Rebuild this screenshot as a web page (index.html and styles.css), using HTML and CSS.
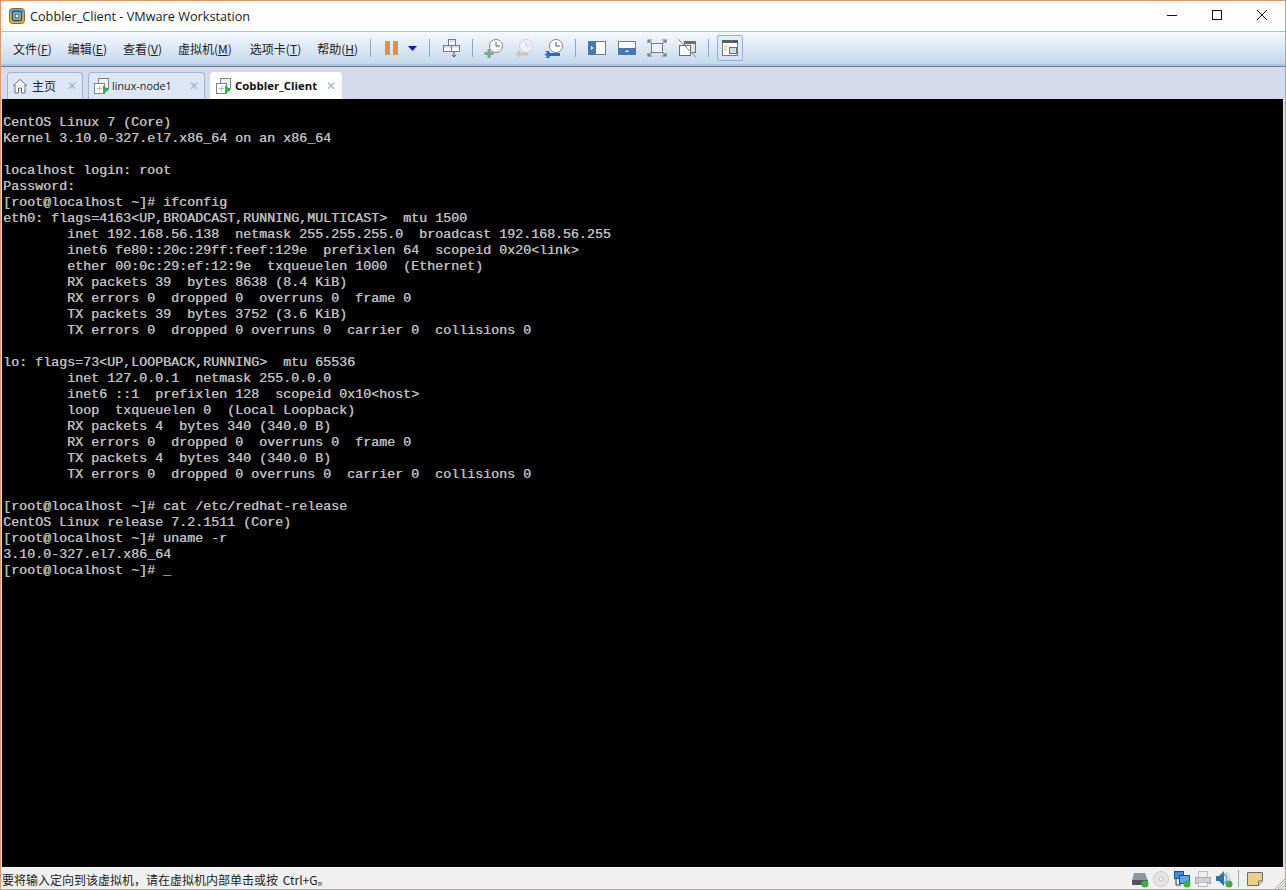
FILE: index.html
```html
<!DOCTYPE html>
<html lang="zh-CN">
<head>
<meta charset="utf-8">
<title>Cobbler_Client - VMware Workstation</title>
<link rel="stylesheet" href="styles.css">
</head>
<body>
<div class="window">
  <header class="titlebar">
    <svg class="app-icon" viewBox="0 0 16 16"><rect x=".5" y=".5" width="15" height="15" rx="3" fill="#e8a93a" stroke="#8a6a30"/><path d="M1 4a3 3 0 0 1 3-3h8a3 3 0 0 1 3 3v1H1z" fill="#4ba3d6"/><rect x="3.5" y="3.5" width="9" height="9" rx="1.5" fill="#9fd3ee" stroke="#24506e" stroke-width="1.4"/><rect x="6" y="6" width="4" height="4" fill="#f4e6b0" stroke="#24506e"/></svg>
    <span class="title-text">Cobbler_Client - VMware Workstation</span>
    <div class="win-controls">
      <svg class="win-btn" viewBox="0 0 12 12"><path d="M1 6.500h10" stroke="#111" fill="none"/></svg>
      <svg class="win-btn" viewBox="0 0 12 12"><rect x="1.500" y="1.500" width="9" height="9" stroke="#111" fill="none"/></svg>
      <svg class="win-btn" viewBox="0 0 12 12"><path d="M1 1l10 10M11 1L1 11" stroke="#111" fill="none"/></svg>
    </div>
  </header>

  <nav class="toolbar">
    <ul class="menu">
      <li>文件(<u>F</u>)</li>
      <li>编辑(<u>E</u>)</li>
      <li>查看(<u>V</u>)</li>
      <li class="menu-wide">虚拟机(<u>M</u>)</li>
      <li>选项卡(<u>T</u>)</li>
      <li>帮助(<u>H</u>)</li>
    </ul>
    <i class="sep"></i>
    <div class="pause-group">
      <svg class="pause" viewBox="0 0 13 14"><path d="M0 0h5v14H0zM8 0h5v14H8z" fill="#d8944f"/></svg>
      <svg class="drop" viewBox="0 0 9 5"><path d="M0 0h9L4.500 5z" fill="#1616c8"/></svg>
    </div>
    <i class="sep"></i>
    <svg class="tool" viewBox="0 0 20 20"><g fill="#fff" stroke="#77797c"><rect x="7.500" y="1.500" width="7" height="6"/><rect x="2.500" y="7.500" width="8" height="6"/><rect x="10.500" y="7.500" width="8" height="6"/></g><path d="M8 3h6M3 9h7M11 9h7" stroke="#a9c4e4"/><path d="M13 14v5M11 17l2 2 2-2" stroke="#55585c" fill="none"/></svg>
    <i class="sep"></i>
    <div class="tool-group">
      <svg class="tool" viewBox="0 0 20 20"><circle cx="12" cy="8" r="6.500" fill="#fff" stroke="#85888c"/><path d="M12 4v4h4" stroke="#55585c" fill="none"/><path d="M3.500 11h3v3h3v3h-3v3h-3v-3h-3v-3h3z" fill="#7fa88b"/></svg>
      <svg class="tool" viewBox="0 0 20 20"><circle cx="12" cy="8" r="6.500" fill="#eef2f8" stroke="#cfd3d8"/><path d="M12 4v4h4" stroke="#c9cdd2" fill="none"/><path d="M1 16l5-4v2.500h8v3H6V20z" fill="#cdc4b6"/></svg>
      <svg class="tool" viewBox="0 0 20 20"><circle cx="12" cy="8" r="6.500" fill="#fff" stroke="#85888c"/><path d="M12 4v4h4" stroke="#55585c" fill="none"/><path d="M1 13h4l1 2h10v3H6l-1 2H1l2-1.500v-1H1v-2h2v-1z" fill="#2f6fb0"/></svg>
    </div>
    <i class="sep"></i>
    <div class="tool-group">
      <svg class="tool" viewBox="0 0 20 20"><rect x="1.500" y="3.500" width="17" height="13" fill="#fff" stroke="#77797c"/><rect x="1" y="3" width="8" height="14" fill="#4878ad"/><path d="M4 8l2.500 2L4 12z" fill="#fff"/></svg>
      <svg class="tool" viewBox="0 0 20 20"><rect x="1.500" y="3.500" width="17" height="13" fill="#fff" stroke="#77797c"/><rect x="1" y="10" width="18" height="7" fill="#4878ad"/><path d="M8 14l2-2 2 2z" fill="#fff"/></svg>
      <svg class="tool" viewBox="0 0 20 20"><rect x="4.500" y="5.500" width="11" height="9" fill="#eef3fa" stroke="#77797c"/><path d="M1 5V2h4M15 2h4v3M1 15v3h4M15 18h4v-3M1 2l3 3M19 2l-3 3M1 18l3-3M19 18l-3-3" stroke="#77797c" stroke-width="1.200" fill="none"/></svg>
      <svg class="tool" viewBox="0 0 20 20"><rect x="7.500" y="3.500" width="11" height="11" fill="#dfe6f0" stroke="#6b6d70"/><rect x="7" y="3" width="12" height="3" fill="#6b6d70"/><rect x="2.500" y="7.500" width="11" height="10" fill="#fff" stroke="#6b6d70"/><path d="M1 1l18 18" stroke="#8a8c90"/></svg>
    </div>
    <i class="sep"></i>
    <div class="tool-active">
      <svg class="tool-inner" viewBox="0 0 16 16"><rect x=".5" y=".5" width="15" height="15" fill="#fff" stroke="#77797c"/><rect x="0" y="0" width="16" height="3" fill="#5b5d60"/><path d="M2 6h3M2 8h3M2 10h3" stroke="#e4bf54"/><rect x="7.500" y="7.500" width="7" height="6" fill="#cfdcea" stroke="#6b6d70"/></svg>
    </div>
  </nav>

  <div class="tabstrip">
    <div class="tab tab-home">
      <svg class="tab-icon" viewBox="0 0 16 16"><path d="M1 8l7-6.500L15 8M3 7v8h3.500v-5h3v5H13V7" fill="#fff" stroke="#666a6e"/></svg>
      <span class="tab-label">主页</span>
      <span class="tab-close">✕</span>
    </div>
    <div class="tab tab-node">
      <svg class="tab-icon" viewBox="0 0 16 16"><rect x="5.500" y=".5" width="10" height="10" fill="#eef2f8" stroke="#7f8286"/><rect x="1.500" y="5.500" width="10" height="10" fill="#fff" stroke="#7f8286"/><path d="M6.500 8v5M4 10.500h5" stroke="#b9bdc2"/><path d="M10 7.500l6 4.250-6 4.250z" fill="#2eb34a"/></svg>
      <span class="tab-label">linux-node1</span>
      <span class="tab-close">✕</span>
    </div>
    <div class="tab tab-client">
      <svg class="tab-icon" viewBox="0 0 16 16"><rect x="5.500" y=".5" width="10" height="10" fill="#eef2f8" stroke="#7f8286"/><rect x="1.500" y="5.500" width="10" height="10" fill="#fff" stroke="#7f8286"/><path d="M6.500 8v5M4 10.500h5" stroke="#b9bdc2"/><path d="M10 7.500l6 4.250-6 4.250z" fill="#2eb34a"/></svg>
      <span class="tab-label">Cobbler_Client</span>
      <span class="tab-close">✕</span>
    </div>
  </div>

  <main class="console-frame">
<pre class="console">CentOS Linux 7 (Core)
Kernel 3.10.0-327.el7.x86_64 on an x86_64

localhost login: root
Password:
[root@localhost ~]# ifconfig
eth0: flags=4163&lt;UP,BROADCAST,RUNNING,MULTICAST&gt;  mtu 1500
        inet 192.168.56.138  netmask 255.255.255.0  broadcast 192.168.56.255
        inet6 fe80::20c:29ff:feef:129e  prefixlen 64  scopeid 0x20&lt;link&gt;
        ether 00:0c:29:ef:12:9e  txqueuelen 1000  (Ethernet)
        RX packets 39  bytes 8638 (8.4 KiB)
        RX errors 0  dropped 0  overruns 0  frame 0
        TX packets 39  bytes 3752 (3.6 KiB)
        TX errors 0  dropped 0 overruns 0  carrier 0  collisions 0

lo: flags=73&lt;UP,LOOPBACK,RUNNING&gt;  mtu 65536
        inet 127.0.0.1  netmask 255.0.0.0
        inet6 ::1  prefixlen 128  scopeid 0x10&lt;host&gt;
        loop  txqueuelen 0  (Local Loopback)
        RX packets 4  bytes 340 (340.0 B)
        RX errors 0  dropped 0  overruns 0  frame 0
        TX packets 4  bytes 340 (340.0 B)
        TX errors 0  dropped 0 overruns 0  carrier 0  collisions 0

[root@localhost ~]# cat /etc/redhat-release
CentOS Linux release 7.2.1511 (Core)
[root@localhost ~]# uname -r
3.10.0-327.el7.x86_64
[root@localhost ~]# _</pre>
  </main>

  <footer class="statusbar">
    <span class="status-text">要将输入定向到该虚拟机，请在虚拟机内部单击或按 Ctrl+G。</span>
    <div class="status-icons">
      <svg class="st" viewBox="0 0 18 18"><path d="M3 3h11l3 8H1z" fill="#8d97a3"/><rect x="1" y="10" width="16" height="5" rx="1" fill="#4c5560"/><circle cx="14" cy="14" r="3.500" fill="#3fae3f"/></svg>
      <svg class="st" viewBox="0 0 18 18"><circle cx="9" cy="9" r="7.500" fill="#e4e4e4" stroke="#c9c9c9"/><circle cx="9" cy="9" r="2" fill="#fff" stroke="#bdbdbd"/></svg>
      <svg class="st" viewBox="0 0 18 18"><rect x="1.500" y="1.500" width="9" height="7" fill="#3f8fd8" stroke="#1f4f86"/><rect x="6.500" y="5.500" width="10" height="8" fill="#58a8e8" stroke="#1f4f86"/><path d="M3 9v6h5" stroke="#333" fill="none"/><circle cx="14" cy="14" r="3.500" fill="#3fae3f"/></svg>
      <svg class="st" viewBox="0 0 18 18"><rect x="4.500" y="1.500" width="9" height="6" fill="#eee" stroke="#c0c0c0"/><rect x="1.500" y="7.500" width="15" height="6" fill="#cfcfcf" stroke="#aaa"/><rect x="4.500" y="12.500" width="9" height="4" fill="#f2f2f2" stroke="#bbb"/></svg>
      <svg class="st" viewBox="0 0 18 18"><path d="M1 6h3l5-5v15l-5-5H1z" fill="#2f6fb0"/><path d="M9 4a5 5 0 0 1 0 9" fill="none" stroke="#7eb0dc" stroke-width="2"/><path d="M11 2a8 8 0 0 1 2 12" fill="none" stroke="#a9c9e6"/><circle cx="14" cy="14" r="3.500" fill="#3fae3f"/></svg>
      <i class="st-sep"></i>
      <svg class="st" viewBox="0 0 18 18"><path d="M1.500 2.500h15v9l-4 4h-11z" fill="#e8cf8a" stroke="#6c6c6c"/><path d="M12.500 15v-4H17" fill="#f5e8c0" stroke="#6c6c6c"/></svg>
      <svg class="grip" viewBox="0 0 12 12"><path d="M12 2L2 12M12 5L5 12M12 8l-4 4" stroke="#a6a6a6" fill="none"/></svg>
    </div>
  </footer>
</div>
</body>
</html>
```

FILE: styles.css
```css
* { box-sizing: border-box; }
html, body { margin: 0; padding: 0; }
body {
  width: 1286px;
  height: 890px;
  overflow: hidden;
  font-family: "Open Sans", "Noto Sans CJK SC", sans-serif;
  font-size: 12px;
  color: #111;
}
.window {
  width: 1286px;
  height: 890px;
  border: 1px solid #dc9a6c;
  display: flex;
  flex-direction: column;
  background: #d5daec;
}
.titlebar {
  height: 30px;
  flex: none;
  background: #fff;
  display: flex;
  align-items: center;
  padding-left: 8px;
}
.app-icon { width: 16px; height: 16px; margin-right: 5px; }
.title-text { font-size: 12.7px; color: #1a1a1a; }
.win-controls { margin: 0 17px 2px auto; display: flex; gap: 33px; }
.win-btn { width: 12px; height: 12px; }
.toolbar {
  height: 35px;
  flex: none;
  display: flex;
  align-items: center;
  gap: 11px;
  padding-left: 12px;
  border-top: 1px solid #a3c0de;
  border-bottom: 2px solid #a9c6e4;
  background: linear-gradient(#f6f8fe, #c4d8ec);
  box-shadow: 0 1px 0 #77797c;
}
.menu {
  list-style: none;
  margin: 0;
  padding: 0;
  display: flex;
  width: 346px;
  gap: 16px;
  font-family: "Noto Sans CJK SC", sans-serif;
  color: #222;
}
.menu u { text-decoration: underline; text-underline-offset: 1px; }
.menu-wide { padding-right: 2px; }
.sep { width: 1px; height: 18px; background: #84a6cc; flex: none; }
.pause-group { display: flex; align-items: center; gap: 10px; margin: 0 1px 0 3px; }
.pause { width: 13px; height: 14px; }
.drop { width: 9px; height: 5px; }
.tool-group { display: flex; gap: 10px; }
.tool { width: 20px; height: 20px; flex: none; }
.tool-active {
  width: 26px;
  height: 26px;
  margin-left: -3px;
  border: 1px solid #8fb4dc;
  border-radius: 2px;
  background: linear-gradient(#e6eefa, #cfdff2);
  display: flex;
  align-items: center;
  justify-content: center;
}
.tool-inner { width: 16px; height: 16px; }
.tabstrip {
  height: 32px;
  flex: none;
  margin-top: 1px;
  padding-left: 6px;
  display: flex;
  align-items: flex-end;
  gap: 5px;
}
.tab {
  height: 27px;
  display: flex;
  align-items: center;
  padding: 0 5px 1px 4px;
  border: 1px solid #9db6d6;
  border-bottom: 0;
  border-radius: 4px 4px 0 0;
  background: #dde6f5;
  color: #222;
}
.tab-home { width: 76px; }
.tab-node { width: 117px; }
.tab-client { width: 132px; background: #fff; border-color: #fff; font-weight: 700; color: #111; }
.tab-icon { width: 16px; height: 16px; flex: none; margin-right: 3px; }
.tab-home .tab-icon, .tab-client .tab-icon { margin-right: 4px; }
.tab-home .tab-label { font-family: "Noto Sans CJK SC", sans-serif; }
.tab-node .tab-label { font-size: 10.8px; }
.tab-client .tab-label { font-size: 11.4px; }
.tab-close {
  margin-left: auto;
  color: #9ab5d6;
  font-family: "DejaVu Sans", sans-serif;
  font-size: 12px;
  font-weight: 700;
}
.console-frame {
  flex: 1;
  min-height: 0;
  margin: 0 2px 0 1px;
  background: #000;
  overflow: hidden;
}
.console {
  margin: 0;
  padding: 16px 0 0 1px;
  font-family: "Liberation Mono", monospace;
  font-size: 13.33px;
  line-height: 16px;
  color: #bdbdbd;
  text-shadow: .5px 0 0 #a8a8a8;
}
.statusbar {
  height: 22px;
  flex: none;
  display: flex;
  align-items: center;
  background: #f0f0f0;
  border-top: 1px solid #fff;
  padding-left: 1px;
  font-family: "Noto Sans CJK SC", sans-serif;
  color: #222;
}
.status-text { text-spacing-trim: space-all; padding-top: 1px; word-spacing: 2px; }
.status-icons { margin-left: auto; display: flex; align-items: center; gap: 3px; }
.st { width: 18px; height: 18px; flex: none; }
.st-sep { width: 1px; height: 17px; background: #a8a8a8; margin: 0 4px 0 2px; }
.grip { width: 12px; height: 12px; margin: 8px 0 0 6px; }
```
